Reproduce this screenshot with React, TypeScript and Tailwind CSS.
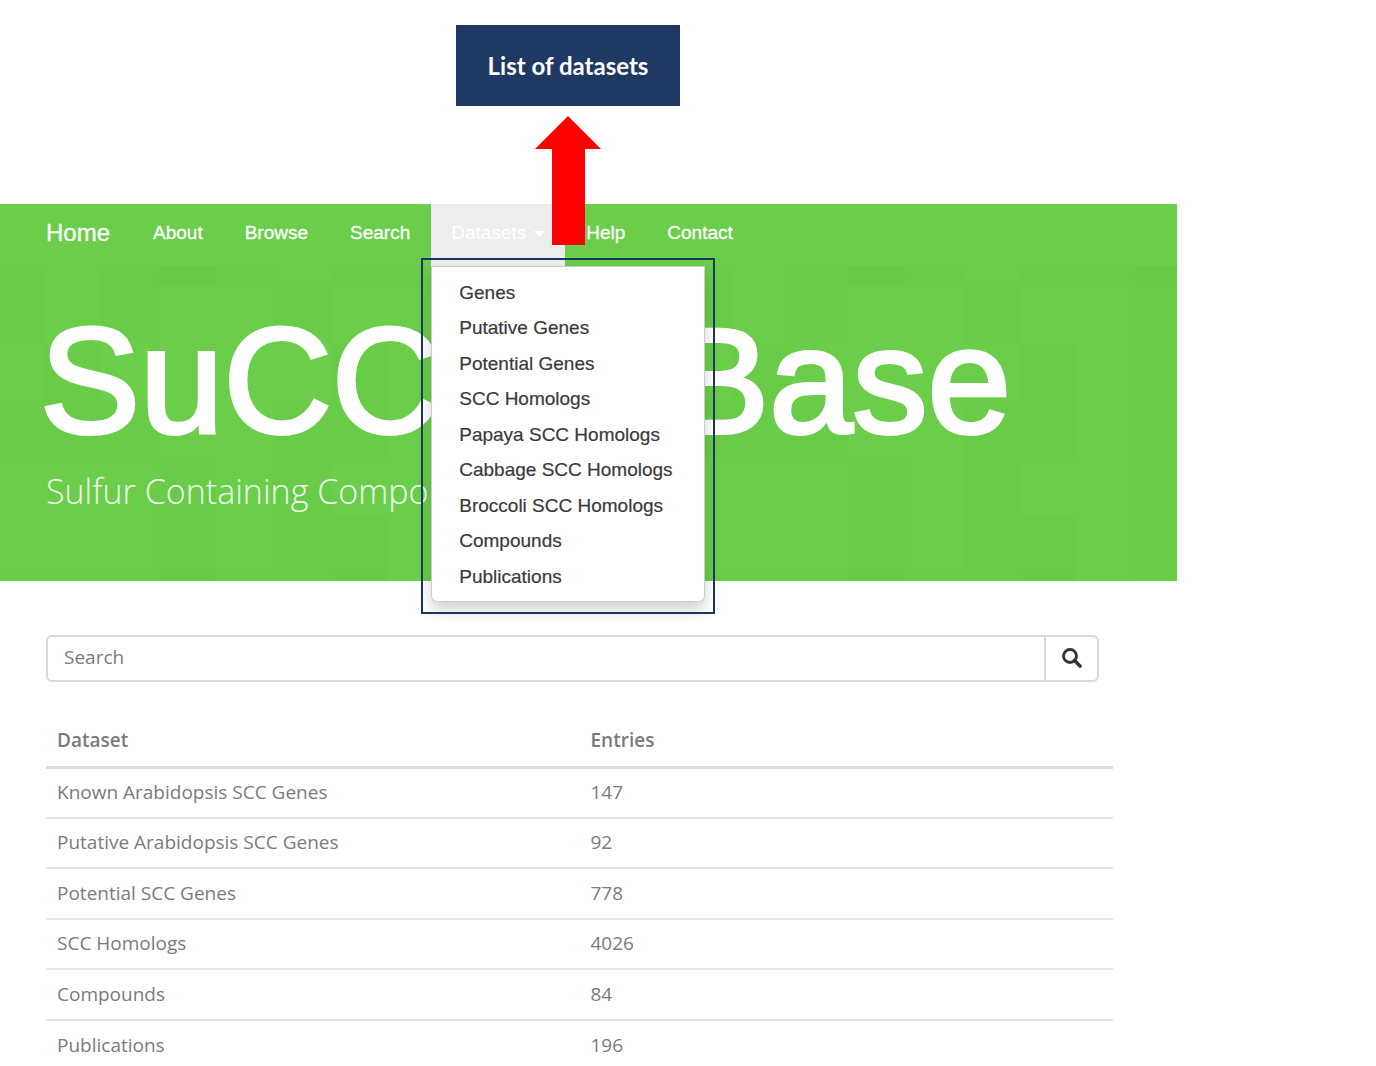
import { useState } from 'react'

interface Dataset {
  name: string
  entries: number
}

const datasets: Dataset[] = [
  { name: 'Known Arabidopsis SCC Genes', entries: 147 },
  { name: 'Putative Arabidopsis SCC Genes', entries: 92 },
  { name: 'Potential SCC Genes', entries: 778 },
  { name: 'SCC Homologs', entries: 4026 },
  { name: 'Compounds', entries: 84 },
  { name: 'Publications', entries: 196 },
]

const menuItems = [
  'Genes',
  'Putative Genes',
  'Potential Genes',
  'SCC Homologs',
  'Papaya SCC Homologs',
  'Cabbage SCC Homologs',
  'Broccoli SCC Homologs',
  'Compounds',
  'Publications',
]

// banner texture, one digit per tile: 0 = plain, 1 = a bit darker, 2 = darkest
const tileRows = [
  '012101121101',
  '010010010101',
  '100001011010',
  '110011010011',
  '001010011010',
  '001011010010',
  '112112011201',
]
const tileFill = ['#6ace4a', '#69cc49', '#67ca47']

function BannerTiles() {
  return (
    <svg className="absolute inset-0 w-full h-full" aria-hidden="true">
      <defs>
        <pattern id="tiles" x="44" y="-37" width="689" height="402" patternUnits="userSpaceOnUse">
          {tileRows.map((row, y) => row.split('').map((v, x) => (
            <rect key={`${x}-${y}`} x={x * 57.4} y={y * 57.4} width="58" height="58" fill={tileFill[Number(v)]} />
          )))}
        </pattern>
      </defs>
      <rect width="100%" height="100%" fill="url(#tiles)" />
    </svg>
  )
}

function NavLink({ label }: { label: string }) {
  return (
    <a href="#" className="flex items-center px-[21px] pb-1 text-[19px] text-white [-webkit-text-stroke:0.3px_white]">{label}</a>
  )
}

function DatasetsMenu() {
  const [open, setOpen] = useState(true)

  return (
    <div className="relative flex">
      <button onClick={() => setOpen(!open)} aria-expanded={open}
        className="flex items-center gap-2 px-5 pb-1 bg-[#ededed] text-white text-[19px] cursor-pointer">
        Datasets
        <svg width="11" height="6" viewBox="0 0 11 6" className="mt-[2px]" aria-hidden="true">
          <path d="M0 0h11L5.500 6z" fill="#fff" />
        </svg>
      </button>
      {open && (
        <div className="absolute z-10 top-full left-0 w-[274px] bg-white border border-black/20 rounded-b-md shadow-[0_8px_16px_rgba(0,0,0,0.18)] pt-2 pb-[6px]">
          <ul className="grid h-[320px]">
            {menuItems.map(item => (
              <li key={item} className="flex">
                <a href="#" className="flex flex-1 items-center pl-[27px] text-[19px] text-[#3a3a3a] whitespace-nowrap [-webkit-text-stroke:0.2px_#3a3a3a]">{item}</a>
              </li>
            ))}
          </ul>
          {/* highlight frame around the menu */}
          <div className="absolute -inset-x-[11px] -top-[9px] -bottom-[13px] border-2 border-[#1c3461] pointer-events-none" />
        </div>
      )}
    </div>
  )
}

export default function App() {
  const [query, setQuery] = useState('')

  return (
    <div className="relative bg-white font-['Open_Sans',sans-serif]">
      {/* callout */}
      <div className="h-[204px] pt-[25px] pl-[456px]">
        <div className="relative w-56 h-[81px] flex items-center justify-center bg-[#203864] text-white">
          <span className="font-['Lato',sans-serif] font-bold text-2xl whitespace-nowrap">List of datasets</span>
          <svg width="66" height="129" viewBox="0 0 66 129" className="absolute z-20 top-[91px] left-[79px]" aria-hidden="true">
            <path d="M33 0L66 33H50V129H17V33H0z" fill="#fe0000" />
          </svg>
        </div>
      </div>

      <header className="mr-[199px] h-[377px] bg-[#6ace4a] font-['Liberation_Sans',Arial,sans-serif] text-white">
        <nav className="relative z-10 flex h-[62px] pl-[26px]">
          <a href="#" className="flex items-center pl-5 pr-[22px] pb-[5px] text-2xl [-webkit-text-stroke:0.3px_white]">Home</a>
          <NavLink label="About" />
          <NavLink label="Browse" />
          <NavLink label="Search" />
          <DatasetsMenu />
          <NavLink label="Help" />
          <NavLink label="Contact" />
        </nav>
        <div className="relative h-[315px] pl-[46px] pt-[30px] overflow-hidden">
          <BannerTiles />
          <h1 className="relative flex gap-[229px] -ml-[6px] text-[150px] leading-[170px] whitespace-nowrap [-webkit-text-stroke:4px_white]">
            <span>SuCC</span>
            <span>Base</span>
          </h1>
          <p className="relative font-['Open_Sans',sans-serif] font-light text-[34px] leading-[50px] text-white/90 whitespace-nowrap">
            Sulfur Containing Compo
          </p>
        </div>
      </header>

      <main className="ml-[46px] mr-[263px] pt-[54px] text-[19px] text-[#7b7b7b]">
        <form onSubmit={e => e.preventDefault()} className="flex h-[47px] mr-[14px] border-2 border-[#d9d9d9] rounded-md">
          <input type="text" aria-label="Search" placeholder="Search" value={query} onChange={e => setQuery(e.target.value)}
            className="flex-1 min-w-0 px-4 pb-[2px] outline-none placeholder:text-[#7b7b7b]" />
          <button type="submit" aria-label="Submit search" className="w-[53px] pb-[2px] flex items-center justify-center border-l-2 border-[#d9d9d9] cursor-pointer">
            <svg width="20" height="20" viewBox="0 0 20 20" fill="none" stroke="#333" aria-hidden="true">
              <circle cx="8" cy="8" r="6.500" strokeWidth="2.800" />
              <path d="M12.500 12.500L18 18" strokeWidth="3.600" strokeLinecap="round" />
            </svg>
          </button>
        </form>

        <table className="w-full mt-8 table-fixed text-left">
          <thead>
            <tr className="h-[53px] border-b-3 border-[#dddddd]">
              <th className="pl-[11px] pt-px font-semibold">Dataset</th>
              <th className="pl-[11px] pt-px font-semibold">Entries</th>
            </tr>
          </thead>
          <tbody>
            {datasets.map(d => (
              <tr key={d.name} className="odd:h-[51px] even:h-[50px] border-b-2 border-[#e6e6e6] last:border-b-0">
                <td className="pl-[11px] pb-px">{d.name}</td>
                <td className="pl-[11px] pb-px">{d.entries}</td>
              </tr>
            ))}
          </tbody>
        </table>
      </main>
    </div>
  )
}
